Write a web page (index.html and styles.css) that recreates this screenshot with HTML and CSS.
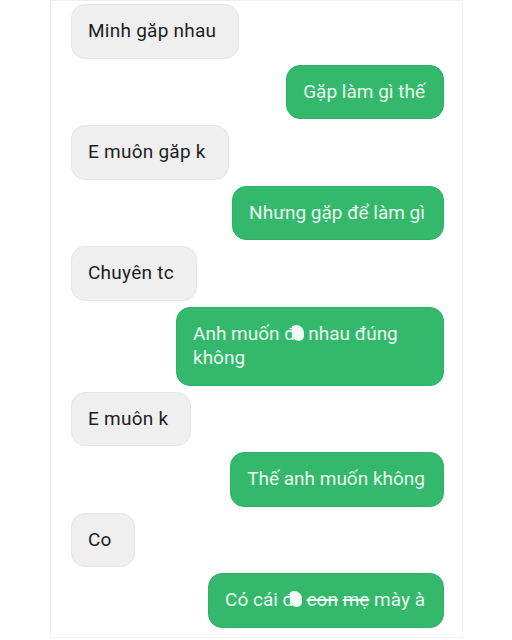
FILE: index.html
```html
<!DOCTYPE html>
<html lang="vi">
<head>
<meta charset="utf-8">
<title>Chat</title>
<link rel="stylesheet" href="styles.css">
</head>
<body>
<div class="frame">
  <div class="thread">
    <div class="msg in">Minh găp nhau</div>
    <div class="msg out">Gặp làm gì thế</div>
    <div class="msg in">E muôn găp k</div>
    <div class="msg out">Nhưng gặp để làm gì</div>
    <div class="msg in">Chuyên tc</div>
    <div class="msg out">Anh muốn đ<span class="blot"></span> nhau đúng không</div>
    <div class="msg in">E muôn k</div>
    <div class="msg out">Thế anh muốn không</div>
    <div class="msg in">Co</div>
    <div class="msg out">Có cái đ<span class="blot"></span> <span class="scratch">con</span> <span class="scratch">mẹ</span> mày à</div>
  </div>
</div>
</body>
</html>
```

FILE: styles.css
```css
html, body {
  margin: 0;
  padding: 0;
  background: #ffffff;
}
body {
  width: 512px;
  height: 640px;
  overflow: hidden;
  font-family: Roboto, "Noto Sans", "Liberation Sans", sans-serif;
}
.frame {
  margin-left: 50px;
  width: 413px;
  height: 638px;
  border-left: 1px solid #efefef;
  border-right: 1px solid #f4f4f4;
  border-top: 1px solid #efefef;
  border-bottom: 1px solid #f2f2f2;
  box-sizing: border-box;
  padding: 3px 18px 0 20px;
}
.thread {
  display: flex;
  flex-direction: column;
  gap: 6px;
}
.msg {
  font-size: 19px;
  line-height: 24.5px;
  border-radius: 14px;
  max-width: 232px;
}
.msg.in {
  align-self: flex-start;
  background: #efefef;
  color: #1e1e1e;
  border: 1px solid #e6e6e6;
  padding: 14px 22px 14px 16px;
  letter-spacing: 0.25px;
}
.msg.out {
  align-self: flex-end;
  background: #34b96c;
  color: #e9f8ee;
  border: 1px solid #31b067;
  padding: 14px 18px 14px 16px;
}
.blot {
  display: inline-block;
  background: #f6fbf8;
  border-radius: 4px 8px 5px 7px;
  margin-left: -4px;
  width: 12px;
  height: 16px;
  vertical-align: -1px;
}
.scratch {
  text-decoration: line-through;
  text-decoration-thickness: 2px;
  text-decoration-color: #f3fbf6;
}
```
